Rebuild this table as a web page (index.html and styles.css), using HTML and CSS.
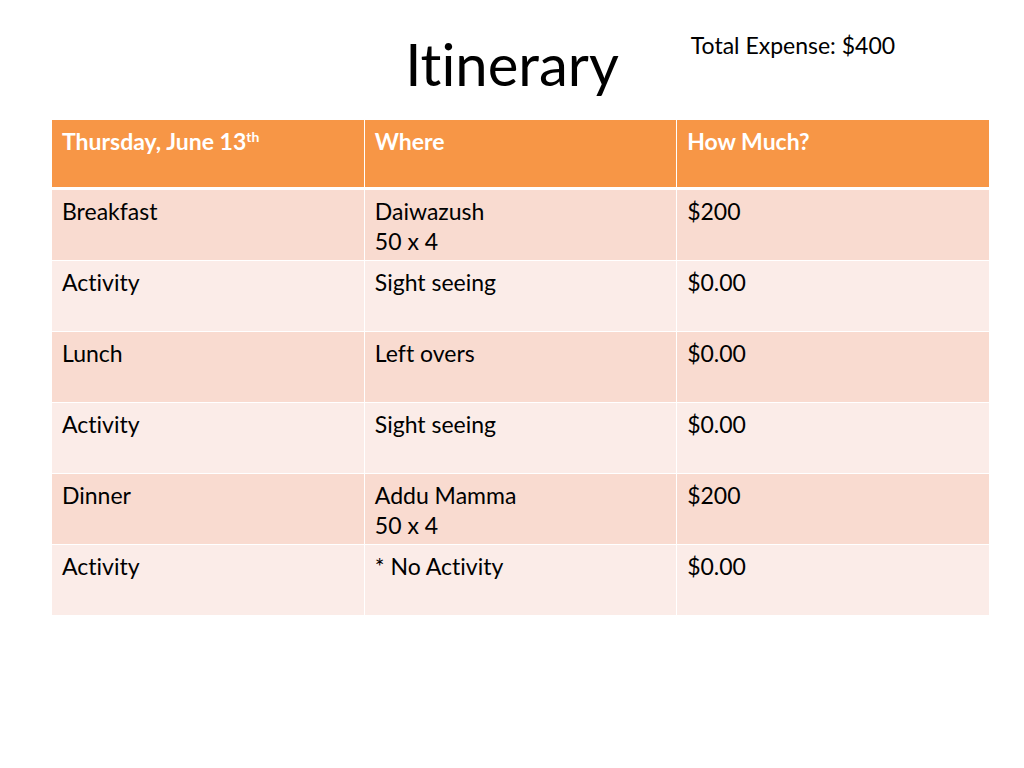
FILE: index.html
```html
<!DOCTYPE html>
<html lang="en">
<head>
<meta charset="utf-8">
<title>Itinerary</title>
<link rel="stylesheet" href="styles.css">
</head>
<body>
<main class="slide">
  <header class="slide-head">
    <div class="spacer"></div>
    <h1 class="title">Itinerary</h1>
    <div class="total">Total Expense: $400</div>
  </header>
  <table class="itinerary">
    <thead>
      <tr>
        <th>Thursday, June 13<sup>th</sup></th>
        <th>Where</th>
        <th>How Much?</th>
      </tr>
    </thead>
    <tbody>
      <tr class="band"><td>Breakfast</td><td>Daiwazush<br>50 x 4</td><td>$200</td></tr>
      <tr><td>Activity</td><td>Sight seeing</td><td>$0.00</td></tr>
      <tr class="band"><td>Lunch</td><td>Left overs</td><td>$0.00</td></tr>
      <tr><td>Activity</td><td>Sight seeing</td><td>$0.00</td></tr>
      <tr class="band"><td>Dinner</td><td>Addu Mamma<br>50 x 4</td><td>$200</td></tr>
      <tr><td>Activity</td><td>* No Activity</td><td>$0.00</td></tr>
    </tbody>
  </table>
</main>
</body>
</html>
```
FILE: styles.css
```css
html, body {
  margin: 0;
  padding: 0;
  background: #ffffff;
}
body {
  font-family: Lato, "Open Sans", "Liberation Sans", sans-serif;
  font-variant-ligatures: none;
  color: #000000;
}
.slide {
  width: 1024px;
  height: 768px;
}
.slide-head {
  display: grid;
  grid-template-columns: 1fr auto 1fr;
  height: 120px;
}
.title {
  margin: 0;
  padding-top: 29px;
  font-weight: 400;
  font-size: 58px;
  line-height: 70px;
}
.total {
  padding-left: 72px;
  padding-top: 30px;
  font-size: 23px;
  line-height: 30px;
  white-space: nowrap;
}
.itinerary {
  width: 937px;
  margin-left: 52px;
  border-collapse: collapse;
  table-layout: fixed;
  font-size: 23px;
  line-height: 30px;
}
.itinerary th,
.itinerary td {
  text-align: left;
  vertical-align: top;
  padding: 6px 10px 0 10px;
  border-left: 1px solid #ffffff;
  border-right: 1px solid #ffffff;
}
.itinerary th:first-child,
.itinerary td:first-child { border-left: none; }
.itinerary th:last-child,
.itinerary td:last-child { border-right: none; }
.itinerary th {
  background: #f79646;
  color: #ffffff;
  font-weight: 700;
  height: 61px;
  border-bottom: 3px solid #ffffff;
}
.itinerary th sup {
  font-size: 14px;
  line-height: 0;
  vertical-align: 8px;
}
.itinerary td {
  height: 64px;
  background: #fbece8;
  border-top: 1px solid #ffffff;
}
.itinerary tr.band td {
  background: #f9dbd0;
}
```
